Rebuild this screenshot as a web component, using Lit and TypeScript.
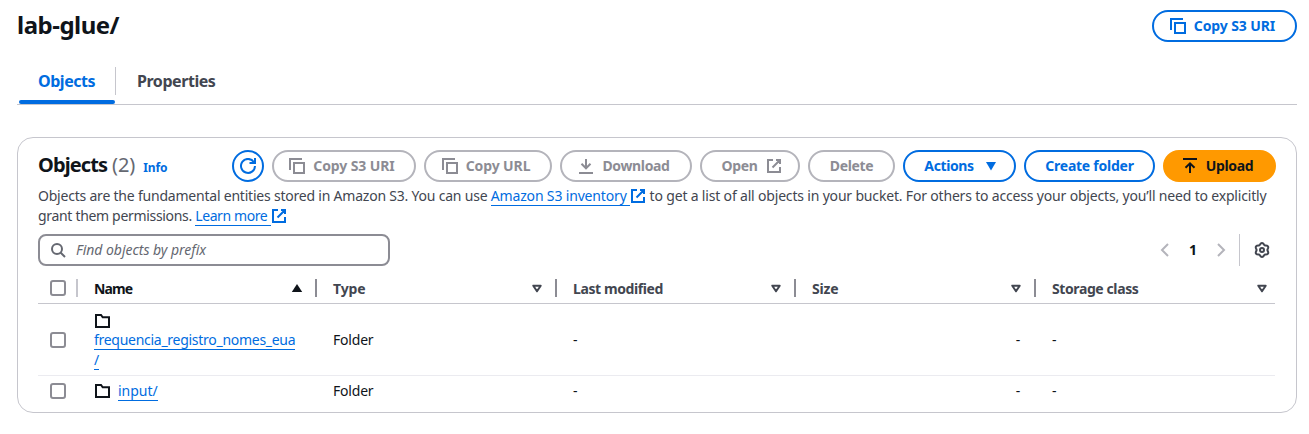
import { LitElement, html, css, svg, nothing } from "lit";
import { customElement } from "lit/decorators.js";

// Six rounded lobes around the hub of the settings icon
const gearOutline =
  "M" +
  Array.from({ length: 72 }, (_, i) => {
    const a = (i / 72) * Math.PI * 2;
    const r = 6.2 - 0.8 * Math.cos(6 * a);
    return `${(8 + r * Math.cos(a)).toFixed(2)} ${(8 + r * Math.sin(a)).toFixed(2)}`;
  }).join("L") +
  "Z";

const icons: Record<string, unknown> = {
  copy: svg`<path d="M1 12V1h12M5 5h10v10H5z"/>`,
  refresh: svg`<path d="M15 8a7 7 0 1 1-1.200-4"/><path d="M15 0v5h-5.500"/>`,
  external: svg`<path d="M10 2h4v4M6.500 9.500 14 2M14 9v5H2V2h5"/>`,
  download: svg`<path d="M8 1v9M3.500 5.800 8 10.300l4.500-4.500M1 15h14"/>`,
  upload: svg`<path d="M1 1h14M8 15V6M3.500 9.800 8 5.300l4.500 4.500"/>`,
  down: svg`<path class="solid" d="M3 4h10l-5 8.500z"/>`,
  up: svg`<path class="solid" d="M2.800 12h10.400L8 4z"/>`,
  sort: svg`<path d="M4.300 5.700h7.400L8 11.300z" stroke-linejoin="round"/>`,
  search: svg`<circle cx="7" cy="7" r="5"/><path d="m10.500 10.500 4.500 4.500"/>`,
  folder: svg`<path d="M2 14V2h5l1.700 2.300H15V14z"/>`,
  left: svg`<path d="m11 2-6 6 6 6"/>`,
  right: svg`<path d="m5 2 6 6-6 6"/>`,
  gear: svg`<path stroke-linejoin="round" d=${gearOutline}/><circle cx="8" cy="8" r="2"/>`,
};
const icon = (name: string, cls = "") =>
  html`<svg class="icon ${cls}" viewBox="0 0 16 16" aria-hidden="true">${icons[name]}</svg>`;

interface Btn { label: string; width: number; kind: string; tracking: number; before?: string; after?: string }
const actions: Btn[] = [
  { label: "Copy S3 URI", width: 144, kind: "disabled", tracking: -0.1, before: "copy" },
  { label: "Copy URL", width: 128, kind: "disabled", tracking: -0.1, before: "copy" },
  { label: "Download", width: 132, kind: "disabled", tracking: -0.35, before: "download" },
  { label: "Open", width: 100, kind: "disabled", tracking: -0.4, after: "external" },
  { label: "Delete", width: 87, kind: "disabled", tracking: -0.35 },
  { label: "Actions", width: 113, kind: "normal", tracking: -0.4, after: "down" },
  { label: "Create folder", width: 131, kind: "normal", tracking: -0.25 },
  { label: "Upload", width: 113, kind: "primary", tracking: -0.35, before: "upload" },
];
const button = (b: Btn) => html`<button
  class="btn ${b.kind} ${b.before ? "before" : ""} ${b.after ? "after" : ""}"
  style="width:${b.width}px;letter-spacing:${b.tracking}px">
  ${b.before ? icon(b.before) : nothing}<span>${b.label}</span>${b.after ? icon(b.after) : nothing}
</button>`;

@customElement("app-root")
export class AppRoot extends LitElement {
  static styles = css`
    :host { display: block; height: 434px; overflow: hidden; background: #fff; color: #0f141a;
      font: 14px/20px "Noto Sans", "Open Sans", sans-serif; }
    * { box-sizing: border-box; }
    .page { padding: 10px 12px 0 17px; }
    .icon { width: 16px; height: 16px; flex: none; fill: none; stroke: currentColor; stroke-width: 2; display: block; }
    .solid { fill: currentColor; stroke: none; }
    .top { display: flex; justify-content: space-between; height: 57px; align-items: flex-start; }
    h1 { margin: 0; font-size: 24px; line-height: 30px; font-weight: 700; letter-spacing: -0.5px; }
    .btn { height: 32px; border: 2px solid #006ce0; border-radius: 20px; background: #fff; color: #006ce0;
      font: 700 14px/20px "Noto Sans", sans-serif; padding: 0; display: flex; gap: 8px;
      align-items: center; justify-content: center; white-space: nowrap; }
    .btn.before { padding-right: 4px; }
    .btn.after { padding-left: 4px; gap: 9px; }
    .btn.disabled { border-color: #b4b4bb; color: #8c8c94; }
    .btn.primary { background: #ff9900; border-color: #ff9900; color: #0f141a; }
    .btn.round { width: 32px; }
    .tabs { display: flex; height: 38px; border-bottom: 1px solid #c6c6cd; font-weight: 700; font-size: 16px; }
    .tab { position: relative; color: #424650; height: 28px; line-height: 28px; padding: 0 20px 0 21px; letter-spacing: -0.45px; white-space: nowrap; }
    .tab.active { color: #006ce0; width: 99px; border-right: 1px solid #c6c6cd; }
    .tab.active::after { content: ""; position: absolute; left: 2px; right: 0; top: 33px; height: 4px; border-radius: 4px; background: #006ce0; }
    .card { margin-top: 32px; height: 276px; border: 1px solid #c6c6cd; border-radius: 16px; padding: 12px 20px 0; }
    .head { display: flex; align-items: center; gap: 8px; }
    .heading { display: flex; align-items: baseline; margin-right: auto; white-space: nowrap; padding-bottom: 2px; }
    h2 { margin: 0; font-size: 20px; line-height: 24px; letter-spacing: -0.9px; }
    .count { font-size: 20px; color: #656871; margin-left: 5px; letter-spacing: -0.1px; }
    .info { font-size: 12px; font-weight: 700; color: #006ce0; margin-left: 8px; letter-spacing: -0.1px; }
    .desc { margin: 4px 0 0; color: #424650; letter-spacing: -0.16px; white-space: nowrap; }
    .d1 { letter-spacing: -0.213px; }
    .d2 { letter-spacing: -0.178px; }
    .d3 { letter-spacing: -0.32px; }
    .tight { letter-spacing: -0.4px; }
    .link { color: #006ce0; border-bottom: 1px solid #006ce0; text-decoration: none; }
    .ext { display: inline-block; vertical-align: -3px; color: #006ce0; }
    .tools { display: flex; align-items: center; margin-top: 8px; height: 32px; }
    .search { width: 352px; height: 32px; border: 2px solid #8c8c94; border-radius: 8px; display: flex; align-items: center;
      gap: 10px; padding-left: 10px; color: #656871; font-style: italic; letter-spacing: -0.03px; }
    .pager { margin-left: auto; display: flex; align-items: center; height: 32px; color: #b4b4bb; }
    .num { width: 40px; text-align: center; color: #0f141a; font-weight: 700; }
    .bar { width: 1px; height: 32px; background: #c6c6cd; margin: 0 14px 0 10px; }
    .gear { color: #424650; margin-right: 6px; }
    .row { display: grid; grid-template-columns: 40px 239px 240px 239px 240px 1fr; align-items: center; border-bottom: 1px solid #ebebf0; height: 72px; margin-right: 1px; }
    .row.header { height: 31px; margin-top: 7px; border-color: #c6c6cd; font-weight: 700; color: #424650; letter-spacing: -0.4px; }
    .row.last { border: 0; height: 30px; }
    .cell { padding-left: 16px; letter-spacing: -0.2px; }
    .th { display: flex; align-items: center; height: 18px; border-right: 2px solid #8c8c94; padding: 0 10px 0 16px; justify-content: space-between; }
    .label { padding-top: 2px; }
    .wide { letter-spacing: -0.15px; }
    .th.light { border-color: #c6c6cd; padding-left: 12px; }
    .th.end { border: 0; padding-right: 5px; }
    .th.sorted { color: #0f141a; letter-spacing: -0.9px; }
    .check { width: 16px; height: 16px; border: 2px solid #8c8c94; border-radius: 3px; margin-left: 12px; }
    .th .check { margin: 0; flex: none; }
    .right { text-align: right; padding-right: 16px; }
    .stacked { letter-spacing: -0.28px; }
    .stacked .icon { margin: 3px 0 1px; }
    .stacked .link { line-height: 20px; }
    .inline { display: flex; gap: 8px; align-items: center; letter-spacing: 0; }
    .inline .link { line-height: 18px; }
  `;

  render() {
    const cols = ["Type", "Last modified", "Size", "Storage class"];
    const cells = html`<div class="cell">Folder</div><div class="cell">-</div><div class="cell right">-</div><div class="cell">-</div>`;
    return html`<main class="page">
      <div class="top"><h1>lab-glue/</h1>${button({ label: "Copy S3 URI", width: 145, kind: "normal", tracking: -0.1, before: "copy" })}</div>
      <nav class="tabs"><div class="tab active">Objects</div><div class="tab">Properties</div></nav>
      <section class="card">
        <div class="head">
          <div class="heading"><h2>Objects</h2><span class="count">(2)</span><span class="info">Info</span></div>
          <button class="btn round normal">${icon("refresh")}</button>
          ${actions.map(button)}
        </div>
        <p class="desc"><span class="d1">Objects are the fundamental entities stored in Amazon S3. You can use </span><a class="link">Amazon S3 inventory&nbsp;</a>${icon("external", "ext")}<span class="d2"> to get a list of all objects in your bucket. For others to access your objects, you’ll need to explicitly</span><br><span class="d3">grant them permissions. </span><a class="link tight">Learn more&nbsp;</a>${icon("external", "ext")}</p>
        <div class="tools">
          <div class="search">${icon("search")}<span>Find objects by prefix</span></div>
          <div class="pager">${icon("left")}<span class="num">1</span>${icon("right")}<span class="bar"></span>${icon("gear", "gear")}</div>
        </div>
        <div class="row header">
          <div class="th light"><span class="check"></span></div>
          <div class="th sorted"><span class="label">Name</span>${icon("up")}</div>
          ${cols.map((c, i) => html`<div class="th ${i === 3 ? "end" : ""}"><span class="label ${c.length < 5 ? "wide" : ""}">${c}</span>${icon("sort")}</div>`)}
        </div>
        <div class="row"><span class="check"></span><div class="cell stacked">${icon("folder")}<a class="link">frequencia_registro_nomes_eua<br>/</a></div>${cells}</div>
        <div class="row last"><span class="check"></span><div class="cell inline">${icon("folder")}<a class="link">input/</a></div>${cells}</div>
      </section>
    </main>`;
  }
}
